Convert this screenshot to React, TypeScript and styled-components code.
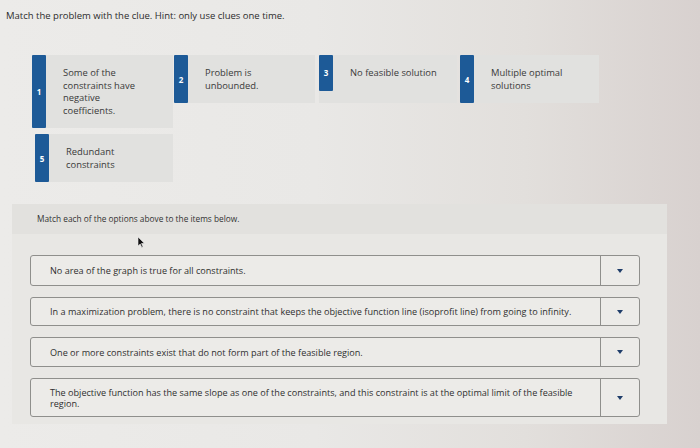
import React from "react";
import styled, { createGlobalStyle } from "styled-components";

const Global = createGlobalStyle`
  html, body { margin: 0; padding: 0; }
  body {
    width: 700px;
    height: 448px;
    overflow: hidden;
    font-family: "Open Sans", Lato, "Liberation Sans", sans-serif;
    color: #2f2f2f;
    background: linear-gradient(90deg, #ecebe9 0%, #e9e8e6 45%, #e2dfdc 75%, #d8d1cf 100%);
  }
`;

const Page = styled.div`
  position: relative;
  padding: 9px 0 0 6px;
  height: 448px;
  box-sizing: border-box;
`;

const Title = styled.div`
  font-size: 9.5px;
  line-height: 13px;
  color: #2c2c2c;
`;

const CardGrid = styled.div`
  display: grid;
  grid-template-columns: repeat(4, 142px);
  row-gap: 6px;
  margin: 33px 0 0 26px;
  align-items: start;
`;

const Card = styled.div<{ $shift?: number }>`
  min-height: 48px;
  background: #e1e1df;
  display: flex;
  align-items: flex-start;
  margin-left: ${(p) => p.$shift ?? 0}px;
  margin-right: 1px;
`;

const Badge = styled.div`
  width: 14px;
  align-self: stretch;
  background: #1d5a97;
  color: #fff;
  font-weight: 700;
  font-size: 8px;
  display: flex;
  align-items: center;
  justify-content: center;
  border-radius: 1px;
`;

const CardInner = styled.div`
  display: flex;
  align-items: stretch;
  min-height: 100%;
`;

const CardText = styled.div`
  padding: 12px 4px 11px 17px;
  font-size: 9.4px;
  line-height: 12.5px;
  color: #3a3a3a;
  width: 106px;
`;

const Panel = styled.div`
  margin: 22px 0 0 6px;
  width: 655px;
  background: #e8e7e4;
  padding-bottom: 7px;
`;

const PanelHead = styled.div`
  background: #e2e1de;
  padding: 10px 0 10px 25px;
  font-size: 8.3px;
  line-height: 10px;
  color: #333;
`;

const Rows = styled.div`
  display: flex;
  flex-direction: column;
  gap: 11px;
  padding: 21px 0 0 18px;
`;

const Row = styled.div<{ $h: number }>`
  width: 610px;
  min-height: ${(p) => p.$h}px;
  box-sizing: border-box;
  display: flex;
  border: 1px solid #8f8f8c;
  border-radius: 3px;
  background: #ecebe8;
`;

const RowText = styled.div`
  flex: 1;
  padding: 0 20px 0 19px;
  display: flex;
  align-items: center;
  font-size: 9.1px;
  line-height: 11px;
  color: #2f2f2f;
`;

const Drop = styled.div`
  width: 38px;
  border-left: 1px solid #8f8f8c;
  display: flex;
  align-items: center;
  justify-content: center;
`;

const Caret = styled.span`
  width: 0;
  height: 0;
  border-left: 3px solid transparent;
  border-right: 3px solid transparent;
  border-top: 4px solid #1f3d6a;
`;

const Pointer = styled.svg`
  position: absolute;
  left: 137px;
  top: 236px;
`;

const cards = [
  { n: 1, text: ["Some of the", "constraints have", "negative", "coefficients."] },
  { n: 2, text: ["Problem is", "unbounded."] },
  { n: 3, text: ["No feasible solution"], shift: 3 },
  { n: 4, text: ["Multiple optimal", "solutions"], shift: 2 },
  { n: 5, text: ["Redundant", "constraints"], shift: 3 },
];

const items = [
  { h: 31, text: "No area of the graph is true for all constraints." },
  { h: 29, text: "In a maximization problem, there is no constraint that keeps the objective function line (isoprofit line) from going to infinity." },
  { h: 30, text: "One or more constraints exist that do not form part of the feasible region." },
  { h: 39, text: "The objective function has the same slope as one of the constraints, and this constraint is at the optimal limit of the feasible region." },
];

export default function App() {
  return (
    <>
      <Global />
      <Page>
        <Title>Match the problem with the clue. Hint: only use clues one time.</Title>
        <CardGrid>
          {cards.map((c) => (
            <Card key={c.n} $shift={c.shift}>
              <CardInner>
                <Badge>{c.n}</Badge>
                <CardText>
                  {c.text.map((l, i) => (
                    <div key={i}>{l}</div>
                  ))}
                </CardText>
              </CardInner>
            </Card>
          ))}
        </CardGrid>
        <Panel>
          <PanelHead>Match each of the options above to the items below.</PanelHead>
          <Rows>
            {items.map((it, i) => (
              <Row key={i} $h={it.h}>
                <RowText>{it.text}</RowText>
                <Drop>
                  <Caret />
                </Drop>
              </Row>
            ))}
          </Rows>
        </Panel>
        <Pointer width="8" height="12" viewBox="0 0 8 12">
          <path d="M1 1 L1 10 L3.2 8 L4.8 11.4 L6 10.8 L4.5 7.5 L7.3 7.3 Z" fill="#111" stroke="#eee" strokeWidth="0.6" />
        </Pointer>
      </Page>
    </>
  );
}
